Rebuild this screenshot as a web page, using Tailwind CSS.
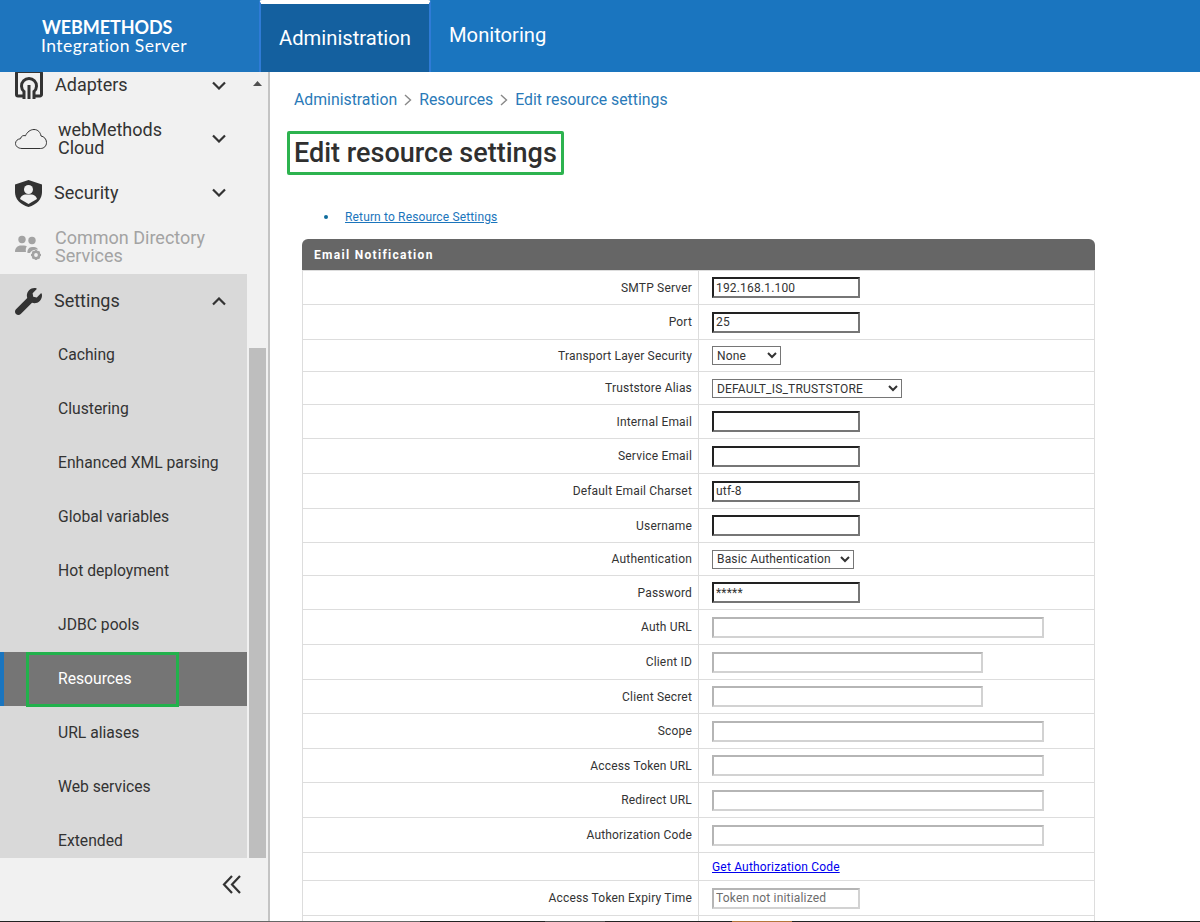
<!DOCTYPE html>
<html lang="en">
<head>
    <meta charset="UTF-8">
    <title>Edit resource settings</title>
    <script src="https://cdn.jsdelivr.net/npm/@tailwindcss/browser@4"></script>
</head>
<body class="font-['Roboto',sans-serif] text-[#333]">
<div class="h-[922px] w-[1200px] overflow-hidden flex flex-col bg-white">

    <!-- top bar -->
    <div class="h-[72px] shrink-0 flex bg-[#1a75bf] text-white">
        <div class="w-[259px] pl-[42px] pt-[18px] bg-[#1e75be] font-['Lato',sans-serif]">
            <div class="text-[18px] leading-[18px] font-bold tracking-[-0.1px]">WEBMETHODS</div>
            <div class="-ml-[1px] text-[17.5px] leading-[20px] tracking-[0.45px]">Integration Server</div>
        </div>
        <div class="w-[172px] h-full bg-[#14609f] border-x-2 border-x-[#2f7bd6] border-t-4 border-t-white rounded-t-[3px] flex items-center justify-center pt-[1px] text-[20.2px]">Administration</div>
        <div class="pl-[18px] flex items-center pb-[1px] text-[20.2px]">Monitoring</div>
    </div>

    <div class="flex-1 flex min-h-0">
        <!-- left menu -->
        <div class="w-[270px] shrink-0 bg-[#f1f1f1] border-r-2 border-r-[#c4c4c4] flex flex-col">
            <div class="h-[786px] flex overflow-hidden">
                <div class="w-[247px] -mt-[14px] text-[18px] leading-[18px]">
                    <div class="h-[54px] flex items-center pl-[15px] pr-[21px]">
                        <svg class="w-[28px] h-[30px] shrink-0" viewBox="0 0 28 30" fill="none" stroke="#333" stroke-width="3">
                            <path d="M8 26H3a1.500 1.500 0 0 1-1.500-1.500V3A1.500 1.500 0 0 1 3 1.500h22A1.500 1.500 0 0 1 26.500 3v21.500A1.500 1.500 0 0 1 25 26h-5"/>
                            <path d="M9 29V21.500a7.500 7.500 0 1 1 10 0V29"/>
                            <path d="M14 29V15"/>
                        </svg>
                        <span class="ml-[12px]">Adapters</span>
                        <svg class="w-[14px] h-[9px] ml-auto" viewBox="0 0 14 9" fill="none" stroke="#333" stroke-width="2.2"><path d="M1 1.500l6 6 6-6"/></svg>
                    </div>
                    <div class="h-[54px] flex items-center pl-[15px] pr-[21px]">
                        <svg class="w-[32px] h-[20px] shrink-0" viewBox="0 0 32 20" fill="none" stroke="#333" stroke-width="1"><path d="M7 19.500C3 19.500.5 17 .5 14.500s2-4.500 5-4.800C6 7 8.500 6 10.500 6.800 12 3 15.500.5 19 .5c4 0 6.500 3 7 6.500 3 .5 5.500 3 5.500 6.500 0 3.500-2.500 6-6 6z"/></svg>
                        <span class="ml-[11px]">webMethods<br>Cloud</span>
                        <svg class="w-[14px] h-[9px] ml-auto mb-[2px]" viewBox="0 0 14 9" fill="none" stroke="#333" stroke-width="2.2"><path d="M1 1.500l6 6 6-6"/></svg>
                    </div>
                    <div class="h-[54px] flex items-center pl-[15px] pr-[21px]">
                        <svg class="w-[27px] h-[27px] shrink-0" viewBox="0 0 27 27">
                            <path fill="#333" d="M13.500 0 27 4.500V12c0 7-5 12.500-13.500 15C5 24.500 0 19 0 12V4.500z"/>
                            <circle cx="13.500" cy="9.500" r="4.500" fill="#f1f1f1"/>
                            <path fill="#f1f1f1" d="M5 19c1-3.500 4-4.500 5.500-4.500h6c1.500 0 4.500 1 5.500 4.500l-8.500 5z"/>
                        </svg>
                        <span class="ml-[12px]">Security</span>
                        <svg class="w-[14px] h-[9px] ml-auto mb-[2px]" viewBox="0 0 14 9" fill="none" stroke="#333" stroke-width="2.2"><path d="M1 1.500l6 6 6-6"/></svg>
                    </div>
                    <div class="h-[54px] flex items-center pl-[15px] text-[#a3a3a3]">
                        <svg class="w-[27px] h-[25px] shrink-0" viewBox="0 0 27 25" fill="#a3a3a3">
                            <circle cx="7" cy="4.500" r="3.700"/><circle cx="17" cy="5.500" r="3.700"/>
                            <path d="M0 17c0-4 2.500-6.500 6-6.500h3c1 0 2 .3 2.800.8-1 1.500-1.300 3.500-.8 5.700z"/>
                            <path d="M12.500 18c-.5-3 1.500-6 4.500-6h2c2 0 3.500 1 4 2.500-3.500 0-7 1-8 3.500z"/>
                            <circle cx="21" cy="20" r="3.200" fill="none" stroke="#a3a3a3" stroke-width="2.600"/>
                            <path d="M21 15v1.500M21 23.500V25M16 20h1.500M24.500 20H26M17.500 16.500l1 1M23.500 22.500l1 1M24.500 16.500l-1 1M18.500 22.500l-1 1" stroke="#a3a3a3" stroke-width="1.800"/>
                        </svg>
                        <span class="ml-[13px]">Common Directory<br>Services</span>
                    </div>
                    <div class="bg-[#d9d9d9]">
                        <div class="h-[54px] flex items-center pl-[15px] pr-[21px]">
                            <svg class="w-[27px] h-[27px] shrink-0" viewBox="0 0 512 512" fill="#333"><path d="M507.730 109.100c-2.240-9.030-13.540-12.090-20.120-5.510l-74.360 74.360-67.880-11.310-11.310-67.880 74.360-74.360c6.620-6.620 3.430-17.900-5.660-20.160-47.380-11.740-99.550.91-136.580 37.930-39.640 39.640-50.550 97.100-34.050 147.200L18.740 402.760c-24.990 24.990-24.990 65.510 0 90.500 24.990 24.990 65.510 24.990 90.500 0l213.210-213.210c50.120 16.710 107.470 5.680 147.370-34.220 37.070-37.070 49.700-89.320 37.910-136.730z"/></svg>
                            <span class="ml-[12px]">Settings</span>
                            <svg class="w-[14px] h-[9px] ml-auto" viewBox="0 0 14 9" fill="none" stroke="#333" stroke-width="2.2"><path d="M1 7.500l6-6 6 6"/></svg>
                        </div>
                        <div class="h-[54px] flex items-center pl-[58px] text-[15.7px]">Caching</div>
                        <div class="h-[54px] flex items-center pl-[58px] text-[15.7px]">Clustering</div>
                        <div class="h-[54px] flex items-center pl-[58px] text-[15.7px]">Enhanced XML parsing</div>
                        <div class="h-[54px] flex items-center pl-[58px] text-[15.7px]">Global variables</div>
                        <div class="h-[54px] flex items-center pl-[58px] text-[15.7px]">Hot deployment</div>
                        <div class="h-[54px] flex items-center pl-[58px] text-[15.7px]">JDBC pools</div>
                        <div class="relative h-[54px] flex items-center pl-[54px] text-[15.7px] text-white bg-[#757575] border-l-4 border-l-[#1a75bf]">
                            Resources
                            <div class="absolute -left-[4px] top-0 ml-[26px] w-[153px] h-[55px] border-[3px] border-[#22b14c]"></div>
                        </div>
                        <div class="h-[54px] flex items-center pl-[58px] text-[15.7px]">URL aliases</div>
                        <div class="h-[54px] flex items-center pl-[58px] text-[15.7px]">Web services</div>
                        <div class="h-[54px] flex items-center pl-[58px] text-[15.7px]">Extended</div>
                    </div>
                </div>
                <!-- scrollbar -->
                <div class="w-[19px] ml-[2px] flex flex-col">
                    <svg class="w-[9px] h-[5px] ml-[4px] mt-[9px]" viewBox="0 0 9 5" fill="#505050"><path d="M4.500 0 9 5H0z"/></svg>
                    <div class="w-[17px] h-[510px] mt-[262px] bg-[#bebebe]"></div>
                </div>
            </div>
            <div class="flex-1 flex justify-end pr-[26px] pt-[17px]">
                <svg class="w-[20px] h-[19px]" viewBox="0 0 20 19" fill="none" stroke="#333" stroke-width="2.200"><path d="M10 1 2 9.500 10 18M18 1 10 9.500 18 18"/></svg>
            </div>
        </div>

        <!-- main content -->
        <div class="flex-1 min-w-0">
            <div class="pl-[24px] pt-[19px] flex items-center h-[37px] text-[15.8px] text-[#2a7ab8]">
                Administration
                <svg class="w-[8px] h-[12px] mx-[7px]" viewBox="0 0 8 12" fill="none" stroke="#888" stroke-width="1.400"><path d="M1 1l5.500 5L1 11"/></svg>
                Resources
                <svg class="w-[8px] h-[12px] mx-[7px]" viewBox="0 0 8 12" fill="none" stroke="#888" stroke-width="1.400"><path d="M1 1l5.500 5L1 11"/></svg>
                Edit resource settings
            </div>
            <h1 class="inline-block mt-[22px] ml-[17px] h-[44px] px-[4px] border-[3px] border-[#2db34f] rounded-[2px] text-[27px] leading-[38px] font-medium text-[#2f2f2f]">Edit resource settings</h1>

            <div class="mt-[35px] pl-[54px] flex items-center text-[12px] leading-[14px] tracking-[0.15px]">
                <span class="w-[4px] h-[4px] rounded-full bg-[#0f6c9c]"></span>
                <a href="#" class="ml-[17px] text-[#1b75bc] underline">Return to Resource Settings</a>
            </div>

            <div class="ml-[32px] mt-[15px] w-[793px]">
                <div class="h-[31px] bg-[#666] rounded-t-[6px] pl-[12px] flex items-center text-[12px] font-bold tracking-[1.3px] text-white">Email Notification</div>
                <table class="w-full table-fixed border-collapse text-[12px] tracking-[0.18px] text-[#333]">
                    <colgroup><col class="w-[396px]"><col></colgroup>
                    <tbody>
                        <tr class="h-[34px]"><td class="border border-[#ddd] text-right pr-[6px]">SMTP Server</td><td class="border border-[#ddd] pl-[13px]"><input value="192.168.1.100" class="block w-[148px] h-[21px] px-[2px] border-2 border-t-[#222] border-l-[#222] border-r-[#767676] border-b-[#767676]"></td></tr>
                        <tr class="h-[35px]"><td class="border border-[#ddd] text-right pr-[6px]">Port</td><td class="border border-[#ddd] pl-[13px]"><input value="25" class="block w-[148px] h-[21px] px-[2px] border-2 border-t-[#222] border-l-[#222] border-r-[#767676] border-b-[#767676]"></td></tr>
                        <tr class="h-[32px]"><td class="border border-[#ddd] text-right pr-[6px]">Transport Layer Security</td><td class="border border-[#ddd] pl-[13px]"><select class="block w-[69px] h-[19px] border border-[#767676]"><option>None</option></select></td></tr>
                        <tr class="h-[33px]"><td class="border border-[#ddd] text-right pr-[6px]">Truststore Alias</td><td class="border border-[#ddd] pl-[13px]"><select class="block w-[190px] h-[19px] mt-[1px] border border-[#767676]"><option>DEFAULT_IS_TRUSTSTORE</option></select></td></tr>
                        <tr class="h-[34px]"><td class="border border-[#ddd] text-right pr-[6px]">Internal Email</td><td class="border border-[#ddd] pl-[13px]"><input class="block w-[148px] h-[21px] px-[2px] border-2 border-t-[#222] border-l-[#222] border-r-[#767676] border-b-[#767676]"></td></tr>
                        <tr class="h-[35px]"><td class="border border-[#ddd] text-right pr-[6px]">Service Email</td><td class="border border-[#ddd] pl-[13px]"><input class="block w-[148px] h-[21px] px-[2px] border-2 border-t-[#222] border-l-[#222] border-r-[#767676] border-b-[#767676]"></td></tr>
                        <tr class="h-[35px]"><td class="border border-[#ddd] text-right pr-[6px]">Default Email Charset</td><td class="border border-[#ddd] pl-[13px]"><input value="utf-8" class="block w-[148px] h-[21px] px-[2px] border-2 border-t-[#222] border-l-[#222] border-r-[#767676] border-b-[#767676]"></td></tr>
                        <tr class="h-[34px]"><td class="border border-[#ddd] text-right pr-[6px]">Username</td><td class="border border-[#ddd] pl-[13px]"><input class="block w-[148px] h-[21px] px-[2px] border-2 border-t-[#222] border-l-[#222] border-r-[#767676] border-b-[#767676]"></td></tr>
                        <tr class="h-[33px]"><td class="border border-[#ddd] text-right pr-[6px]">Authentication</td><td class="border border-[#ddd] pl-[13px]"><select class="block w-[142px] h-[19px] border border-[#767676]"><option>Basic Authentication</option></select></td></tr>
                        <tr class="h-[34px]"><td class="border border-[#ddd] text-right pr-[6px]">Password</td><td class="border border-[#ddd] pl-[13px]"><input value="*****" class="block w-[148px] h-[21px] px-[2px] border-2 border-t-[#222] border-l-[#222] border-r-[#767676] border-b-[#767676]"></td></tr>
                        <tr class="h-[35px]"><td class="border border-[#ddd] text-right pr-[6px]">Auth URL</td><td class="border border-[#ddd] pl-[13px]"><input class="block w-[332px] h-[21px] px-[2px] border-2 border-t-[#b5b5b5] border-l-[#b5b5b5] border-r-[#d2d2d2] border-b-[#d2d2d2]"></td></tr>
                        <tr class="h-[35px]"><td class="border border-[#ddd] text-right pr-[6px]">Client ID</td><td class="border border-[#ddd] pl-[13px]"><input class="block w-[271px] h-[21px] px-[2px] border-2 border-t-[#b5b5b5] border-l-[#b5b5b5] border-r-[#d2d2d2] border-b-[#d2d2d2]"></td></tr>
                        <tr class="h-[34px]"><td class="border border-[#ddd] text-right pr-[6px]">Client Secret</td><td class="border border-[#ddd] pl-[13px]"><input class="block w-[271px] h-[21px] px-[2px] border-2 border-t-[#b5b5b5] border-l-[#b5b5b5] border-r-[#d2d2d2] border-b-[#d2d2d2]"></td></tr>
                        <tr class="h-[35px]"><td class="border border-[#ddd] text-right pr-[6px]">Scope</td><td class="border border-[#ddd] pl-[13px]"><input class="block w-[332px] h-[21px] px-[2px] border-2 border-t-[#b5b5b5] border-l-[#b5b5b5] border-r-[#d2d2d2] border-b-[#d2d2d2]"></td></tr>
                        <tr class="h-[34px]"><td class="border border-[#ddd] text-right pr-[6px]">Access Token URL</td><td class="border border-[#ddd] pl-[13px]"><input class="block w-[332px] h-[21px] px-[2px] border-2 border-t-[#b5b5b5] border-l-[#b5b5b5] border-r-[#d2d2d2] border-b-[#d2d2d2]"></td></tr>
                        <tr class="h-[35px]"><td class="border border-[#ddd] text-right pr-[6px]">Redirect URL</td><td class="border border-[#ddd] pl-[13px]"><input class="block w-[332px] h-[21px] px-[2px] border-2 border-t-[#b5b5b5] border-l-[#b5b5b5] border-r-[#d2d2d2] border-b-[#d2d2d2]"></td></tr>
                        <tr class="h-[35px]"><td class="border border-[#ddd] text-right pr-[6px]">Authorization Code</td><td class="border border-[#ddd] pl-[13px]"><input class="block w-[332px] h-[21px] px-[2px] border-2 border-t-[#b5b5b5] border-l-[#b5b5b5] border-r-[#d2d2d2] border-b-[#d2d2d2]"></td></tr>
                        <tr class="h-[28px]"><td class="border border-[#ddd]"></td><td class="border border-[#ddd] pl-[13px]"><a href="#" class="text-[#0000ee] underline">Get Authorization Code</a></td></tr>
                        <tr class="h-[35px]"><td class="border border-[#ddd] text-right pr-[6px]">Access Token Expiry Time</td><td class="border border-[#ddd] pl-[13px]"><input value="Token not initialized" disabled class="block w-[148px] h-[21px] px-[2px] text-[#6d6d6d] border-2 border-t-[#b5b5b5] border-l-[#b5b5b5] border-r-[#d2d2d2] border-b-[#d2d2d2]"></td></tr>
                        <tr class="h-[35px]"><td class="border border-[#ddd]"></td><td class="border border-[#ddd]"></td></tr>
                    </tbody>
                </table>
            </div>
        </div>
    </div>

    <!-- strip of the window below, one pixel high -->
    <div class="h-[1px] shrink-0 flex bg-[#222]">
        <div class="w-[60px]"></div>
        <div class="w-[360px] bg-[#666]"></div>
        <div class="w-[125px]"></div>
        <div class="w-[60px] bg-[#555]"></div>
        <div class="w-[127px]"></div>
        <div class="w-[60px] bg-[#b5763a]"></div>
    </div>
</div>
</body>
</html>
